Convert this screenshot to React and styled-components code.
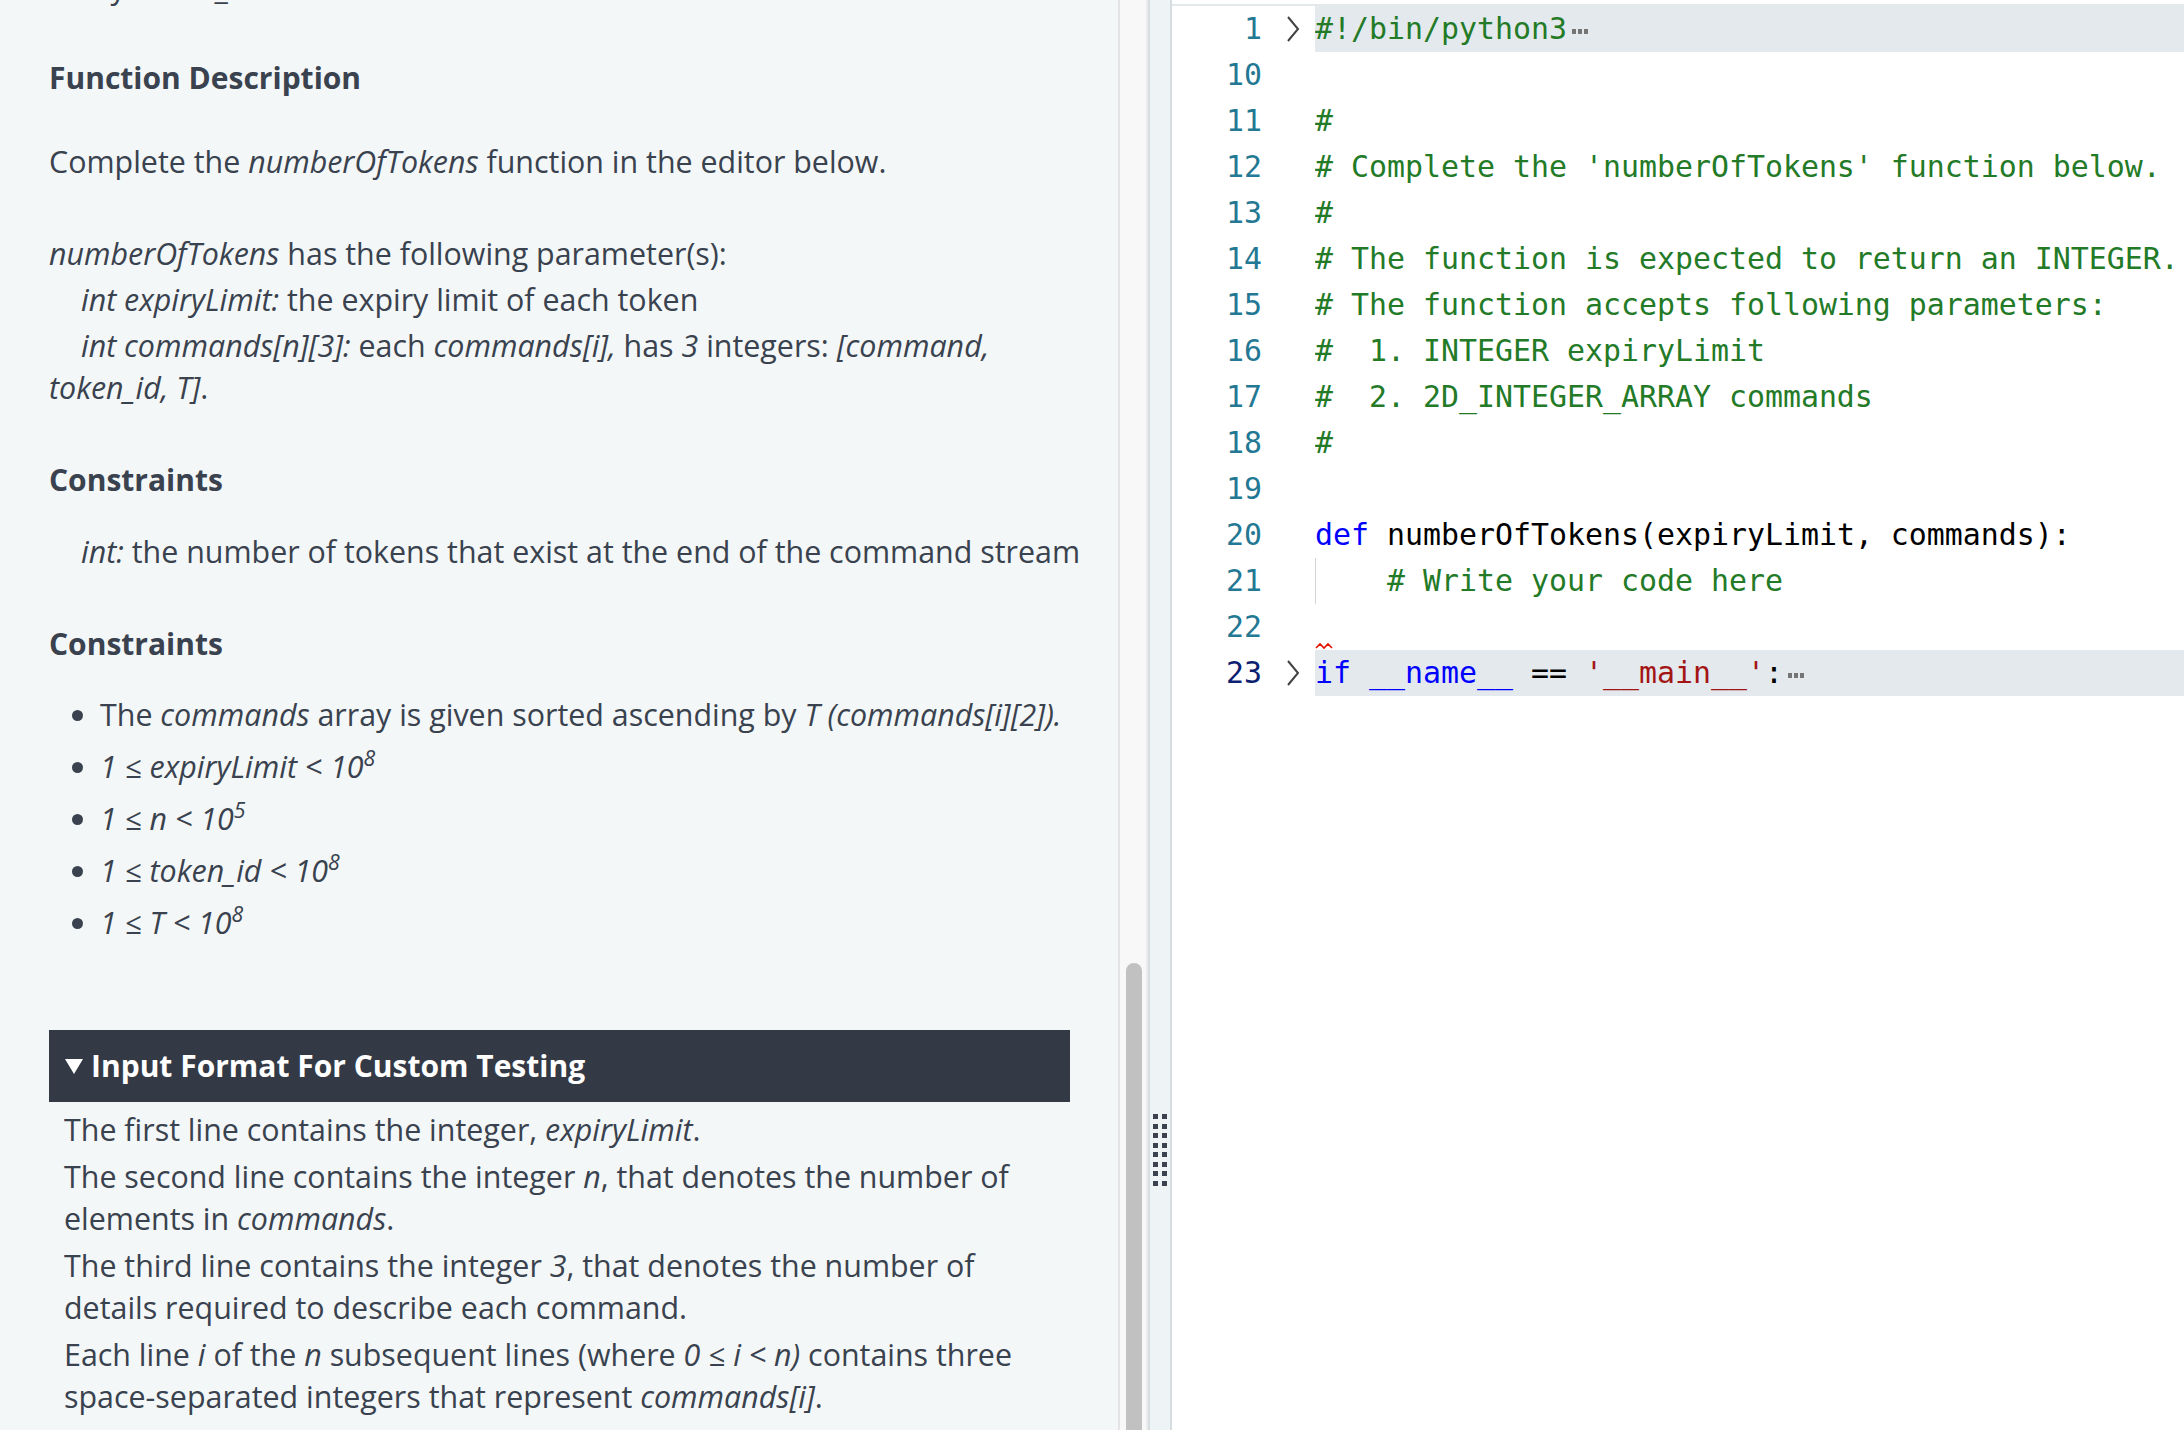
import React from "react";
import styled, { createGlobalStyle } from "styled-components";

const GlobalStyle = createGlobalStyle`
  html, body {
    margin: 0;
    padding: 0;
    background: #ffffff;
    overflow: hidden;
  }
  #root {
    height: 100vh;
  }
`;

const Page = styled.div`
  display: flex;
  height: 100vh;
  overflow: hidden;
`;

/* ---------- problem statement ---------- */

const ProblemPane = styled.section`
  width: 1118px;
  flex-shrink: 0;
  background: #f3f7f7;
  overflow: hidden;
  font-family: "Open Sans", "Noto Sans", sans-serif;
  font-size: 30.4px;
  line-height: 42px;
  color: #39424e;
`;

const Content = styled.div`
  margin-top: -33px;
  padding: 0 48px 0 49px;
`;

const Heading = styled.h3`
  margin: ${(p) => p.$top}px 0 0;
  font-size: 30px;
  font-weight: 700;
  line-height: 42px;
`;

const Para = styled.p`
  margin: ${(p) => p.$top || 0}px 0 0;
  text-indent: ${(p) => (p.$indent ? "32px" : "0")};
  white-space: ${(p) => (p.$nowrap ? "nowrap" : "normal")};
`;

const Em = styled.em`
  font-style: italic;
`;

const Sup = styled.sup`
  font-size: 0.7em;
  line-height: 0;
  vertical-align: 0.55em;
`;

const BulletList = styled.ul`
  margin: 29px 0 0;
  padding-left: 51px;

  li + li {
    margin-top: 10px;
  }
`;

const SectionBar = styled.div`
  margin-top: 86px;
  height: 72px;
  display: flex;
  align-items: center;
  gap: 8px;
  padding-left: 16px;
  background: #343a45;
  color: #ffffff;
  font-weight: 700;
  font-size: 30px;
`;

const SectionBody = styled.div`
  padding: 7px 40px 0 15px;

  p + p {
    margin-top: 5px;
  }
`;

/* ---------- scrollbar + splitter ---------- */

const ScrollTrack = styled.div`
  width: 16px;
  flex-shrink: 0;
  padding: 963px 4px 0 6px;
  background: #f8f8f8;
  border-left: 2px solid #e4e4e4;
  border-right: 2px solid #ececec;
`;

const Thumb = styled.div`
  height: 100%;
  background: #c1c1c1;
  border-radius: 8px 8px 0 0;
`;

const Splitter = styled.div`
  width: 17px;
  flex-shrink: 0;
  background: #eef3f5;
  border-left: 2px solid #d3dde2;
  border-right: 2px solid #d3dde2;
  padding: 1114px 0 0 3px;
`;

const Grip = styled.div`
  display: grid;
  grid-template-columns: 5px 5px;
  grid-auto-rows: 5px;
  column-gap: 4px;
  row-gap: 4.5px;

  span {
    background: #39424e;
  }
`;

/* ---------- editor ---------- */

const Editor = styled.div`
  flex: 1;
  min-width: 0;
  background: #ffffff;
  padding-top: 4px;
  overflow: hidden;
`;

const Lines = styled.div`
  border-top: 2px solid #e3e8eb;
  font-family: "DejaVu Sans Mono", "Liberation Mono", monospace;
  font-size: 29.9px;
  line-height: 46px;
`;

const Row = styled.div`
  display: flex;
  height: 46px;
`;

const LineNo = styled.div`
  width: 90px;
  flex-shrink: 0;
  text-align: right;
  color: ${(p) => (p.$active ? "#0b216f" : "#237893")};
`;

const FoldCell = styled.div`
  width: 53px;
  flex-shrink: 0;
  display: flex;
  align-items: center;
  padding-left: 24px;
  box-sizing: border-box;
`;

const Code = styled.div`
  flex: 1;
  display: flex;
  align-items: ${(p) => (p.$squiggle ? "flex-end" : "center")};
  white-space: pre;
  overflow: hidden;
  background: ${(p) => (p.$folded ? "#e4e9ed" : "transparent")};
  box-shadow: ${(p) => (p.$guide ? "inset 1px 0 0 #d3d3d3" : "none")};
`;

const Tok = styled.span`
  color: ${(p) => p.$color};
`;

const Ellipsis = styled.svg`
  margin-left: 5px;
  margin-top: 6px;
`;

const tokenColors = {
  c: "#237a27",
  k: "#0000ff",
  t: "#000000",
  s: "#a31515",
};

const codeLines = [
  { n: 1, folded: true, parts: [["c", "#!/bin/python3"]] },
  { n: 10, parts: [] },
  { n: 11, parts: [["c", "#"]] },
  { n: 12, parts: [["c", "# Complete the 'numberOfTokens' function below."]] },
  { n: 13, parts: [["c", "#"]] },
  { n: 14, parts: [["c", "# The function is expected to return an INTEGER."]] },
  { n: 15, parts: [["c", "# The function accepts following parameters:"]] },
  { n: 16, parts: [["c", "#  1. INTEGER expiryLimit"]] },
  { n: 17, parts: [["c", "#  2. 2D_INTEGER_ARRAY commands"]] },
  { n: 18, parts: [["c", "#"]] },
  { n: 19, parts: [] },
  {
    n: 20,
    parts: [
      ["k", "def"],
      ["t", " numberOfTokens(expiryLimit, commands):"],
    ],
  },
  { n: 21, guide: true, parts: [["c", "    # Write your code here"]] },
  { n: 22, squiggle: true, parts: [] },
  {
    n: 23,
    folded: true,
    active: true,
    parts: [
      ["k", "if"],
      ["t", " "],
      ["k", "__name__"],
      ["t", " == "],
      ["s", "'__main__'"],
      ["t", ":"],
    ],
  },
];

const Chevron = () => (
  <svg width="14" height="26" viewBox="0 0 14 26">
    <polyline
      points="2,1 12,13 2,25"
      fill="none"
      stroke="#424242"
      strokeWidth="2"
    />
  </svg>
);

const Squiggle = () => (
  <svg width="20" height="8" viewBox="0 0 20 8">
    <path
      d="M1 6 L5 2 L9 6 L13 2 L17 6"
      fill="none"
      stroke="#e51400"
      strokeWidth="1.6"
    />
  </svg>
);

const FoldDots = () => (
  <Ellipsis width="16" height="6" viewBox="0 0 16 6">
    <rect x="0" y="0" width="4" height="5" fill="#757575" />
    <rect x="6" y="0" width="4" height="5" fill="#757575" />
    <rect x="12" y="0" width="4" height="5" fill="#757575" />
  </Ellipsis>
);

const Triangle = () => (
  <svg width="18" height="16" viewBox="0 0 18 16">
    <polygon points="0,1 18,1 9,16" fill="#ffffff" />
  </svg>
);

const ProblemStatement = () => (
  <ProblemPane>
    <Content>
      <Para>Every token_id is counted once</Para>

      <Heading $top={48}>Function Description</Heading>

      <Para $top={42}>
        Complete the <Em>numberOfTokens</Em> function in the editor below.
      </Para>

      <Para $top={50}>
        <Em>numberOfTokens</Em> has the following parameter(s):
      </Para>
      <Para $top={4} $indent>
        <Em>int expiryLimit:</Em> the expiry limit of each token
      </Para>
      <Para $top={4} $indent>
        <Em>int commands[n][3]:</Em> each <Em>commands[i],</Em> has{" "}
        <Em>3</Em> integers: <Em>[command, token_id, T]</Em>.
      </Para>

      <Heading $top={50}>Constraints</Heading>
      <Para $top={30} $indent $nowrap>
        <Em>int:</Em> the number of tokens that exist at the end of the
        command stream
      </Para>

      <Heading $top={50}>Constraints</Heading>
      <BulletList>
        <li>
          The <Em>commands</Em> array is given sorted ascending by{" "}
          <Em>T (commands[i][2]).</Em>
        </li>
        <li>
          <Em>
            1 ≤ expiryLimit &lt; 10<Sup>8</Sup>
          </Em>
        </li>
        <li>
          <Em>
            1 ≤ n &lt; 10<Sup>5</Sup>
          </Em>
        </li>
        <li>
          <Em>
            1 ≤ token_id &lt; 10<Sup>8</Sup>
          </Em>
        </li>
        <li>
          <Em>
            1 ≤ T &lt; 10<Sup>8</Sup>
          </Em>
        </li>
      </BulletList>

      <SectionBar>
        <Triangle />
        Input Format For Custom Testing
      </SectionBar>
      <SectionBody>
        <Para>
          The first line contains the integer, <Em>expiryLimit</Em>.
        </Para>
        <Para>
          The second line contains the integer <Em>n</Em>, that denotes the
          number of elements in <Em>commands</Em>.
        </Para>
        <Para>
          The third line contains the integer <Em>3</Em>, that denotes the
          number of details required to describe each command.
        </Para>
        <Para>
          Each line <Em>i</Em> of the <Em>n</Em> subsequent lines (where{" "}
          <Em>0 ≤ i &lt; n)</Em> contains three space-separated integers that
          represent <Em>commands[i]</Em>.
        </Para>
      </SectionBody>
    </Content>
  </ProblemPane>
);

const CodeEditor = () => (
  <Editor>
    <Lines>
      {codeLines.map((line) => (
        <Row key={line.n}>
          <LineNo $active={line.active}>{line.n}</LineNo>
          <FoldCell>{line.folded && <Chevron />}</FoldCell>
          <Code
            $folded={line.folded}
            $guide={line.guide}
            $squiggle={line.squiggle}
          >
            {line.parts.map(([kind, text], i) => (
              <Tok key={i} $color={tokenColors[kind]}>
                {text}
              </Tok>
            ))}
            {line.folded && <FoldDots />}
            {line.squiggle && <Squiggle />}
          </Code>
        </Row>
      ))}
    </Lines>
  </Editor>
);

const App = () => (
  <>
    <GlobalStyle />
    <Page>
      <ProblemStatement />
      <ScrollTrack>
        <Thumb />
      </ScrollTrack>
      <Splitter>
        <Grip>
          {Array.from({ length: 16 }).map((_, i) => (
            <span key={i} />
          ))}
        </Grip>
      </Splitter>
      <CodeEditor />
    </Page>
  </>
);

export default App;
